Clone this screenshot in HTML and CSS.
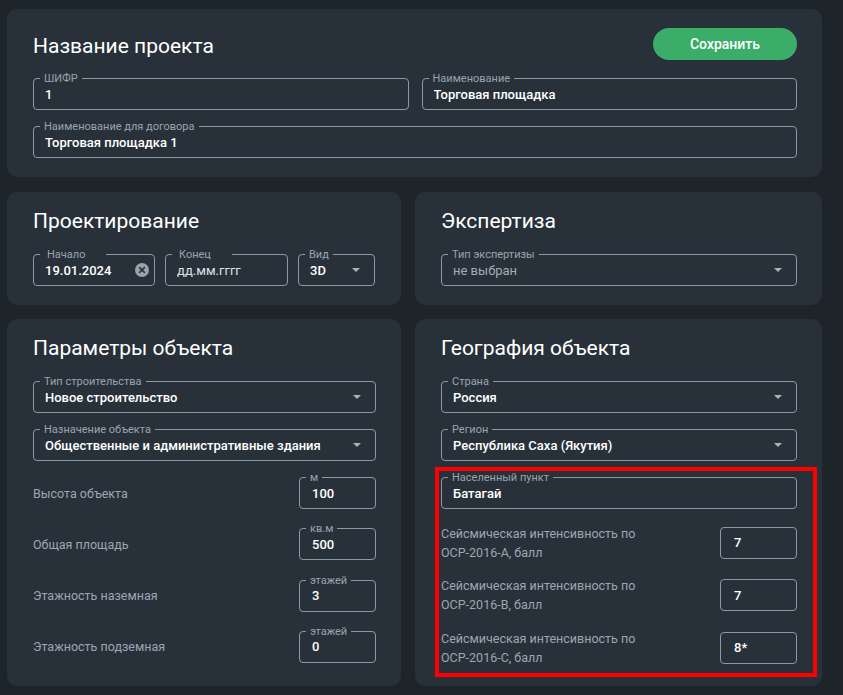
FILE: index.html
```html
<!DOCTYPE html>
<html lang="ru">
<head>
<meta charset="utf-8">
<title>Проект</title>
<link rel="stylesheet" href="styles.css">
</head>
<body>
<div class="page">
  <section class="card card-main">
    <div class="main-head">
      <h1 class="card-title">Название проекта</h1>
      <button class="btn-save" type="button">Сохранить</button>
    </div>
    <div class="stack">
      <div class="row-two">
        <div class="field"><span class="field-label">ШИФР</span><span class="value">1</span></div>
        <div class="field"><span class="field-label">Наименование</span><span class="value">Торговая площадка</span></div>
      </div>
      <div class="field"><span class="field-label">Наименование для договора</span><span class="value">Торговая площадка 1</span></div>
    </div>
  </section>

  <div class="grid">
    <section class="card">
      <h2 class="card-title">Проектирование</h2>
      <div class="row-dates">
        <div class="field"><span class="field-label wide">Начало</span><span class="value">19.01.2024</span>
          <span class="clear-icon"><svg width="14" height="14" viewBox="0 0 14 14"><circle cx="7" cy="7" r="7" fill="#9aa2ab"/><path d="M4.6 4.6l4.8 4.8M9.4 4.6l-4.8 4.8" stroke="#2a333c" stroke-width="1.6" stroke-linecap="round"/></svg></span>
        </div>
        <div class="field"><span class="field-label wide">Конец</span><span class="value placeholder">дд.мм.гггг</span></div>
        <div class="field select"><span class="field-label">Вид</span><span class="value">3D</span><span class="arrow"></span></div>
      </div>
    </section>

    <section class="card">
      <h2 class="card-title">Экспертиза</h2>
      <div class="field select"><span class="field-label">Тип экспертизы</span><span class="value muted">не выбран</span><span class="arrow"></span></div>
    </section>

    <section class="card">
      <h2 class="card-title">Параметры объекта</h2>
      <div class="stack">
        <div class="field select"><span class="field-label">Тип строительства</span><span class="value">Новое строительство</span><span class="arrow"></span></div>
        <div class="field select"><span class="field-label">Назначение объекта</span><span class="value">Общественные и административные здания</span><span class="arrow"></span></div>
        <div class="num-list">
          <div class="num-row"><span class="row-label">Высота объекта</span><div class="field small"><span class="field-label">м</span><span class="value">100</span></div></div>
          <div class="num-row"><span class="row-label">Общая площадь</span><div class="field small"><span class="field-label">кв.м</span><span class="value">500</span></div></div>
          <div class="num-row"><span class="row-label">Этажность наземная</span><div class="field small"><span class="field-label">этажей</span><span class="value">3</span></div></div>
          <div class="num-row"><span class="row-label">Этажность подземная</span><div class="field small"><span class="field-label">этажей</span><span class="value">0</span></div></div>
        </div>
      </div>
    </section>

    <section class="card geo">
      <h2 class="card-title">География объекта</h2>
      <div class="stack">
        <div class="field select"><span class="field-label">Страна</span><span class="value">Россия</span><span class="arrow"></span></div>
        <div class="field select"><span class="field-label">Регион</span><span class="value">Республика Саха (Якутия)</span><span class="arrow"></span></div>
        <div class="seis-list">
          <div class="field"><span class="field-label">Населенный пункт</span><span class="value">Батагай</span></div>
          <div class="seis-row"><span class="row-label two">Сейсмическая интенсивность по ОСР-2016-А, балл</span><div class="field small"><span class="value num">7</span></div></div>
          <div class="seis-row"><span class="row-label two">Сейсмическая интенсивность по ОСР-2016-B, балл</span><div class="field small"><span class="value num">7</span></div></div>
          <div class="seis-row"><span class="row-label two">Сейсмическая интенсивность по ОСР-2016-C, балл</span><div class="field small"><span class="value num">8*</span></div></div>
        </div>
      </div>
      <div class="highlight"></div>
    </section>
  </div>
</div>
</body>
</html>
```

FILE: styles.css
```css
* { box-sizing: border-box; }

html, body {
  margin: 0;
  padding: 0;
  background: #1d242a;
}

body {
  font-family: Roboto, "Noto Sans", "Liberation Sans", sans-serif;
  color: #ffffff;
}

.page {
  padding: 9px 21px 12px 7px;
  width: 843px;
}

.card {
  background: #28313a;
  border-radius: 10px;
  padding: 15px 25px 19px 26px;
  position: relative;
}

.card-main {
  padding-top: 19px;
}

.main-head {
  display: flex;
  align-items: flex-end;
  justify-content: space-between;
  margin-bottom: 18px;
}

.card-title {
  margin: 0 0 19px 0;
  font-size: 21px;
  line-height: 28px;
  font-weight: 400;
  color: #ffffff;
}

.main-head .card-title {
  margin: 0;
}

.btn-save {
  width: 144px;
  height: 32px;
  border: none;
  border-radius: 16px;
  background: #3aad69;
  color: #ffffff;
  font-family: inherit;
  font-size: 14px;
  font-weight: 500;
  padding: 0;
}

.stack {
  display: flex;
  flex-direction: column;
  gap: 16px;
}

.row-two {
  display: grid;
  grid-template-columns: 1fr 1fr;
  column-gap: 13px;
}

.grid {
  margin-top: 15px;
  display: grid;
  grid-template-columns: 394px 407px;
  column-gap: 14px;
  row-gap: 14px;
}

.field {
  position: relative;
  height: 32px;
  border: 1px solid #8d99a5;
  border-radius: 4px;
  display: flex;
  align-items: center;
  padding: 0 11px;
}

.field-label {
  position: absolute;
  top: -7px;
  left: 6px;
  padding: 0 4px;
  font-size: 11px;
  line-height: 13px;
  color: #98a4b0;
  background: #28313a;
  white-space: nowrap;
}

.field-label.wide {
  left: 6px;
  padding: 0 21px 0 7px;
}

.value {
  font-size: 13px;
  font-weight: 500;
  color: #ffffff;
  white-space: nowrap;
  overflow: hidden;
  flex: 1;
}

.value.placeholder {
  color: #dfe3e7;
  font-weight: 400;
}

.value.muted {
  color: #a3adb7;
  font-weight: 400;
}

.value.num {
  padding-left: 1px;
}

.arrow {
  width: 0;
  height: 0;
  border-left: 4px solid transparent;
  border-right: 4px solid transparent;
  border-top: 4px solid #a9b3bd;
  margin-right: 3px;
  flex: none;
}

.clear-icon {
  display: flex;
  flex: none;
  margin-right: -6px;
}

.row-dates {
  display: grid;
  grid-template-columns: 122px 123px 77px;
  column-gap: 10px;
}

.num-list {
  display: flex;
  flex-direction: column;
  gap: 19.33px;
}

.num-row,
.seis-row {
  display: flex;
  align-items: center;
  justify-content: space-between;
}

.field.small {
  width: 77px;
  flex: none;
  padding-left: 12px;
}

.row-label {
  font-size: 12.5px;
  line-height: 19px;
  color: #9ba7b2;
}

.row-label.two {
  max-width: 215px;
}

.seis-list {
  display: flex;
  flex-direction: column;
  gap: 14.5px;
}

.highlight {
  position: absolute;
  left: 20px;
  top: 148px;
  width: 382px;
  height: 210px;
  border: 4px solid #ff0000;
  pointer-events: none;
}
```
